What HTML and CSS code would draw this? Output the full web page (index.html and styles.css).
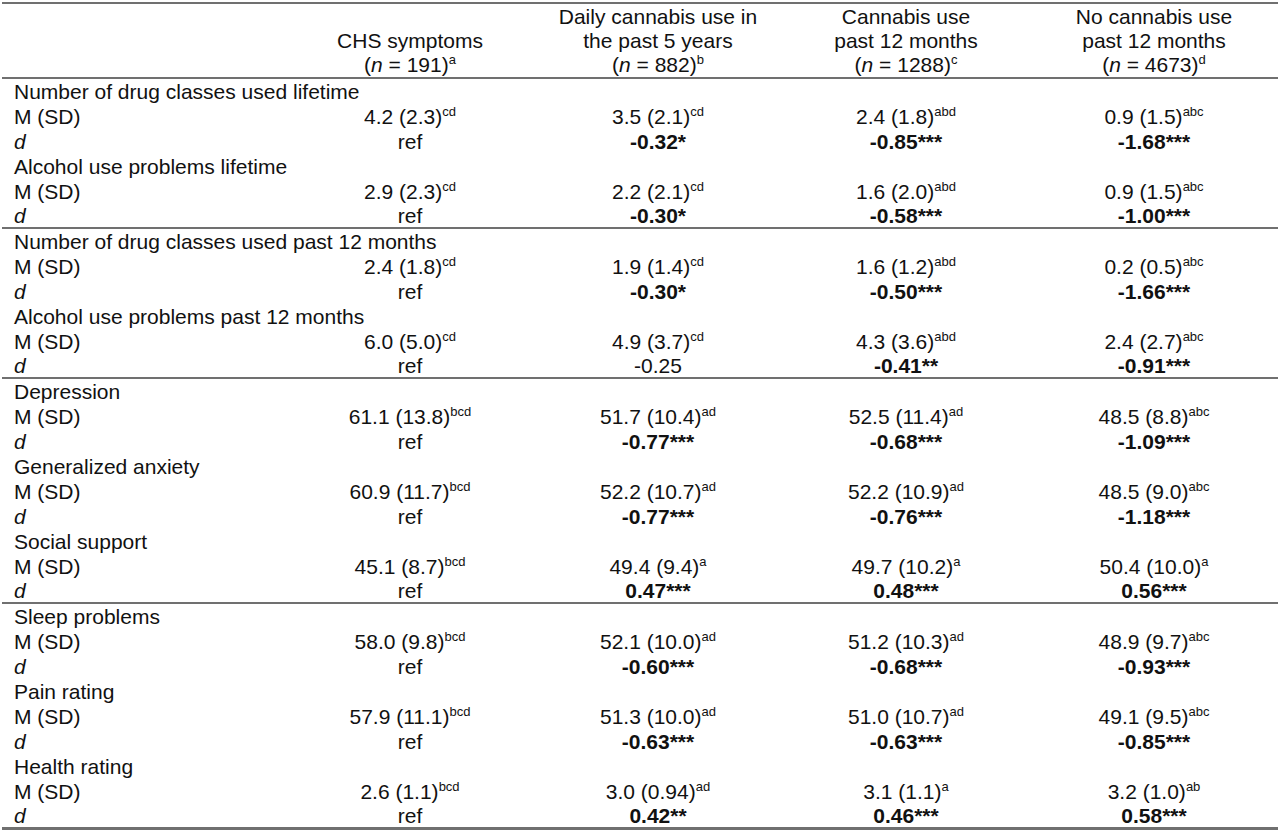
FILE: index.html
```html
<!DOCTYPE html>
<html lang="en">
<head>
<meta charset="utf-8">
<title>Table</title>
<link rel="stylesheet" href="styles.css">
</head>
<body>
<table class="stats">
  <colgroup>
    <col class="c-label"><col class="c-val"><col class="c-val"><col class="c-val"><col class="c-val">
  </colgroup>
  <thead>
    <tr>
      <th></th>
      <th>CHS symptoms<br>(<i>n</i> = 191)<sup>a</sup></th>
      <th>Daily cannabis use in<br>the past 5 years<br>(<i>n</i> = 882)<sup>b</sup></th>
      <th>Cannabis use<br>past 12 months<br>(<i>n</i> = 1288)<sup>c</sup></th>
      <th>No cannabis use<br>past 12 months<br>(<i>n</i> = 4673)<sup>d</sup></th>
    </tr>
  </thead>
  <tbody>
    <tr class="grp"><td colspan="5">Number of drug classes used lifetime</td></tr>
    <tr><td class="lab">M (SD)</td><td>4.2 (2.3)<sup>cd</sup></td><td>3.5 (2.1)<sup>cd</sup></td><td>2.4 (1.8)<sup>abd</sup></td><td>0.9 (1.5)<sup>abc</sup></td></tr>
    <tr><td class="lab"><i>d</i></td><td>ref</td><td><b>-0.32*</b></td><td><b>-0.85***</b></td><td><b>-1.68***</b></td></tr>
    <tr class="grp"><td colspan="5">Alcohol use problems lifetime</td></tr>
    <tr><td class="lab">M (SD)</td><td>2.9 (2.3)<sup>cd</sup></td><td>2.2 (2.1)<sup>cd</sup></td><td>1.6 (2.0)<sup>abd</sup></td><td>0.9 (1.5)<sup>abc</sup></td></tr>
    <tr class="end"><td class="lab"><i>d</i></td><td>ref</td><td><b>-0.30*</b></td><td><b>-0.58***</b></td><td><b>-1.00***</b></td></tr>
  </tbody>
  <tbody>
    <tr class="grp"><td colspan="5">Number of drug classes used past 12 months</td></tr>
    <tr><td class="lab">M (SD)</td><td>2.4 (1.8)<sup>cd</sup></td><td>1.9 (1.4)<sup>cd</sup></td><td>1.6 (1.2)<sup>abd</sup></td><td>0.2 (0.5)<sup>abc</sup></td></tr>
    <tr><td class="lab"><i>d</i></td><td>ref</td><td><b>-0.30*</b></td><td><b>-0.50***</b></td><td><b>-1.66***</b></td></tr>
    <tr class="grp"><td colspan="5">Alcohol use problems past 12 months</td></tr>
    <tr><td class="lab">M (SD)</td><td>6.0 (5.0)<sup>cd</sup></td><td>4.9 (3.7)<sup>cd</sup></td><td>4.3 (3.6)<sup>abd</sup></td><td>2.4 (2.7)<sup>abc</sup></td></tr>
    <tr class="end"><td class="lab"><i>d</i></td><td>ref</td><td>-0.25</td><td><b>-0.41**</b></td><td><b>-0.91***</b></td></tr>
  </tbody>
  <tbody>
    <tr class="grp"><td colspan="5">Depression</td></tr>
    <tr><td class="lab">M (SD)</td><td>61.1 (13.8)<sup>bcd</sup></td><td>51.7 (10.4)<sup>ad</sup></td><td>52.5 (11.4)<sup>ad</sup></td><td>48.5 (8.8)<sup>abc</sup></td></tr>
    <tr><td class="lab"><i>d</i></td><td>ref</td><td><b>-0.77***</b></td><td><b>-0.68***</b></td><td><b>-1.09***</b></td></tr>
    <tr class="grp"><td colspan="5">Generalized anxiety</td></tr>
    <tr><td class="lab">M (SD)</td><td>60.9 (11.7)<sup>bcd</sup></td><td>52.2 (10.7)<sup>ad</sup></td><td>52.2 (10.9)<sup>ad</sup></td><td>48.5 (9.0)<sup>abc</sup></td></tr>
    <tr><td class="lab"><i>d</i></td><td>ref</td><td><b>-0.77***</b></td><td><b>-0.76***</b></td><td><b>-1.18***</b></td></tr>
    <tr class="grp"><td colspan="5">Social support</td></tr>
    <tr><td class="lab">M (SD)</td><td>45.1 (8.7)<sup>bcd</sup></td><td>49.4 (9.4)<sup>a</sup></td><td>49.7 (10.2)<sup>a</sup></td><td>50.4 (10.0)<sup>a</sup></td></tr>
    <tr class="end"><td class="lab"><i>d</i></td><td>ref</td><td><b>0.47***</b></td><td><b>0.48***</b></td><td><b>0.56***</b></td></tr>
  </tbody>
  <tbody>
    <tr class="grp"><td colspan="5">Sleep problems</td></tr>
    <tr><td class="lab">M (SD)</td><td>58.0 (9.8)<sup>bcd</sup></td><td>52.1 (10.0)<sup>ad</sup></td><td>51.2 (10.3)<sup>ad</sup></td><td>48.9 (9.7)<sup>abc</sup></td></tr>
    <tr><td class="lab"><i>d</i></td><td>ref</td><td><b>-0.60***</b></td><td><b>-0.68***</b></td><td><b>-0.93***</b></td></tr>
    <tr class="grp"><td colspan="5">Pain rating</td></tr>
    <tr><td class="lab">M (SD)</td><td>57.9 (11.1)<sup>bcd</sup></td><td>51.3 (10.0)<sup>ad</sup></td><td>51.0 (10.7)<sup>ad</sup></td><td>49.1 (9.5)<sup>abc</sup></td></tr>
    <tr><td class="lab"><i>d</i></td><td>ref</td><td><b>-0.63***</b></td><td><b>-0.63***</b></td><td><b>-0.85***</b></td></tr>
    <tr class="grp"><td colspan="5">Health rating</td></tr>
    <tr><td class="lab">M (SD)</td><td>2.6 (1.1)<sup>bcd</sup></td><td>3.0 (0.94)<sup>ad</sup></td><td>3.1 (1.1)<sup>a</sup></td><td>3.2 (1.0)<sup>ab</sup></td></tr>
    <tr class="last"><td class="lab"><i>d</i></td><td>ref</td><td><b>0.42**</b></td><td><b>0.46***</b></td><td><b>0.58***</b></td></tr>
  </tbody>
</table>
</body>
</html>
```

FILE: styles.css
```css
html, body {
  margin: 0;
  padding: 0;
  background: #fff;
}

body {
  font-family: "Liberation Sans", Arial, sans-serif;
  font-size: 21px;
  color: #111;
}

.stats {
  margin: 2px 0 0 2px;
  width: 1276px;
  table-layout: fixed;
  border-collapse: separate;
  border-spacing: 0;
  border-top: 2px solid #707070;
}

.c-label { width: 284px; }
.c-val { width: 248px; }

.stats th {
  font-weight: normal;
  text-align: center;
  vertical-align: bottom;
  line-height: 24px;
  padding: 1px 0 0 0;
  border-bottom: 2px solid #707070;
  white-space: nowrap;
}

.stats td {
  padding: 0;
  line-height: 25px;
  text-align: center;
  white-space: nowrap;
}

.stats tr.grp td,
.stats td.lab {
  text-align: left;
  padding-left: 12px;
}

.stats tr.end td {
  line-height: 23px;
  border-bottom: 2px solid #707070;
}

.stats tr.last td {
  line-height: 23px;
  border-bottom: 3px solid #707070;
}

.stats sup {
  font-size: 13px;
  line-height: 0;
  vertical-align: 8px;
}

.stats b {
  font-weight: bold;
}
```
